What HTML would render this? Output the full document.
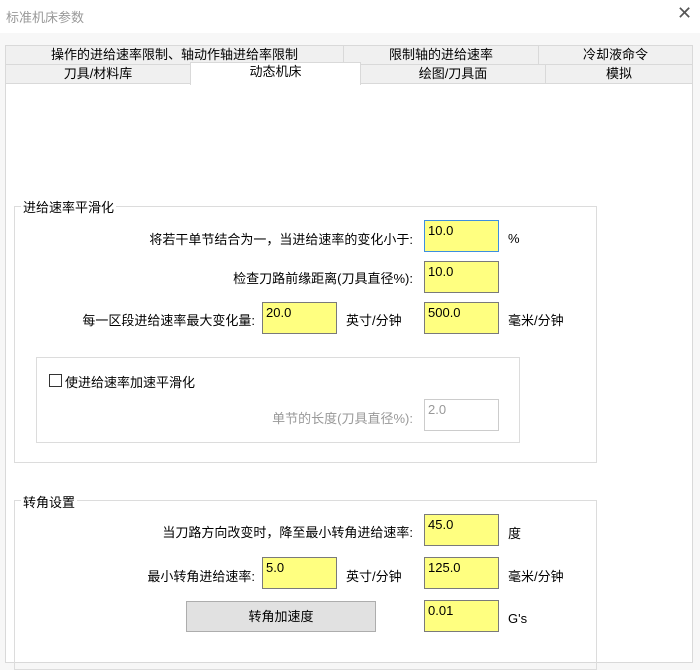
<!DOCTYPE html>
<html><head><meta charset="utf-8"><style>
*{margin:0;padding:0;box-sizing:border-box}
body{width:700px;height:652px;overflow:hidden;background:#f7f7f7;font-family:"Liberation Sans","Microsoft YaHei","Noto Sans CJK SC",sans-serif;font-size:13px;color:#000;position:relative}
.a{position:absolute}
.title{left:0;top:0;width:700px;height:33px;background:#fff}
.tab{position:absolute;height:20px;background:#f0f0f0;border:1px solid #d9d9d9;text-align:center;line-height:18px;font-size:13px}
.panel{left:5px;top:83px;width:688px;height:580px;background:#fff;border:1px solid #d9d9d9}
.grp{position:absolute;border:1px solid #dcdcdc}
.leg{position:absolute;background:#fff;padding:0 2px;font-size:13px}
.in{position:absolute;width:75px;height:32px;background:#ffff80;border:1px solid #7a7a7a;padding:2px 0 0 3px;font-size:13px}
.lbl{position:absolute;font-size:13px;white-space:nowrap}
.r{text-align:right}
</style></head><body>
<div class="a title"></div>
<div class="a" style="left:6px;top:7px;color:#999;font-size:13px">标准机床参数</div>
<div class="a" style="left:677px;top:3px;color:#555;font-size:18px;font-weight:lighter">✕</div>

<div class="tab" style="left:5px;top:45px;width:339px">操作的进给速率限制、轴动作轴进给率限制</div>
<div class="tab" style="left:343px;top:45px;width:196px">限制轴的进给速率</div>
<div class="tab" style="left:538px;top:45px;width:155px">冷却液命令</div>
<div class="tab" style="left:5px;top:64px;width:186px">刀具/材料库</div>
<div class="tab" style="left:360px;top:64px;width:186px">绘图/刀具面</div>
<div class="tab" style="left:545px;top:64px;width:148px">模拟</div>
<div class="a panel"></div>
<div class="tab" style="left:190px;top:62px;width:171px;height:23px;background:#fff;border-bottom:none">动态机床</div>

<div class="grp" style="left:14px;top:206px;width:583px;height:257px"></div>
<div class="leg" style="left:21px;top:197px">进给速率平滑化</div>
<div class="lbl r" style="right:287px;top:229px">将若干单节结合为一，当进给速率的变化小于:</div>
<div class="in" style="left:424px;top:220px;border-color:#3d8fe0">10.0</div>
<div class="lbl" style="left:508px;top:231px">%</div>
<div class="lbl r" style="right:287px;top:268px">检查刀路前缘距离(刀具直径%):</div>
<div class="in" style="left:424px;top:261px">10.0</div>
<div class="lbl r" style="right:445px;top:310px">每一区段进给速率最大变化量:</div>
<div class="in" style="left:262px;top:302px">20.0</div>
<div class="lbl" style="left:346px;top:310px">英寸/分钟</div>
<div class="in" style="left:424px;top:302px">500.0</div>
<div class="lbl" style="left:508px;top:310px">毫米/分钟</div>

<div class="grp" style="left:36px;top:357px;width:484px;height:86px"></div>
<div class="a" style="left:49px;top:374px;width:13px;height:13px;border:1px solid #333;background:#fff"></div>
<div class="lbl" style="left:65px;top:372px">使进给速率加速平滑化</div>
<div class="lbl r" style="right:287px;top:408px;color:#999">单节的长度(刀具直径%):</div>
<div class="in" style="left:424px;top:399px;background:#fff;border-color:#ccc;color:#999">2.0</div>

<div class="grp" style="left:14px;top:500px;width:583px;height:170px"></div>
<div class="leg" style="left:21px;top:492px">转角设置</div>
<div class="lbl r" style="right:287px;top:522px">当刀路方向改变时，降至最小转角进给速率:</div>
<div class="in" style="left:424px;top:514px">45.0</div>
<div class="lbl" style="left:508px;top:523px">度</div>
<div class="lbl r" style="right:445px;top:566px">最小转角进给速率:</div>
<div class="in" style="left:262px;top:557px">5.0</div>
<div class="lbl" style="left:346px;top:566px">英寸/分钟</div>
<div class="in" style="left:424px;top:557px">125.0</div>
<div class="lbl" style="left:508px;top:566px">毫米/分钟</div>
<div class="a" style="left:186px;top:601px;width:190px;height:31px;background:#e1e1e1;border:1px solid #adadad;text-align:center;line-height:29px">转角加速度</div>
<div class="in" style="left:424px;top:600px">0.01</div>
<div class="lbl" style="left:508px;top:611px">G's</div>
</body></html>
